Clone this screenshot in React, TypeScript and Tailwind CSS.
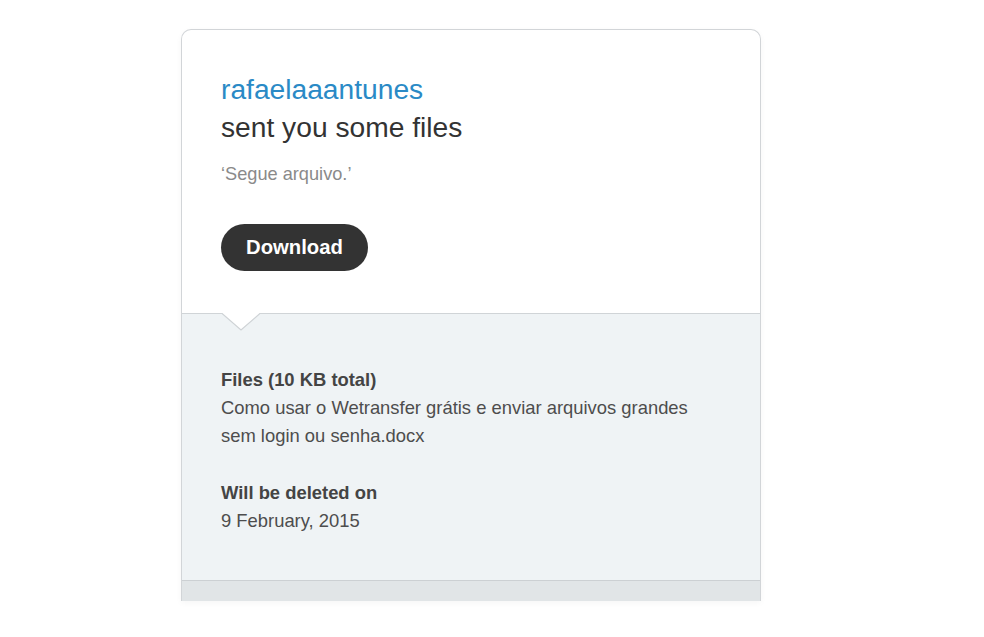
const font = { fontFamily: '"Liberation Sans", Arial, sans-serif' };

export default function App() {
  return (
    <div className="min-h-screen bg-white" style={font}>
      <div className="pt-[29px] pl-[181px]">
        {/* Card */}
        <div className="w-[580px] rounded-t-[10px] border border-b-0 border-[#d2d5d8] bg-white shadow-[0_2px_6px_rgba(0,0,0,0.04)]">
          {/* Header */}
          <div className="px-[39px] pt-[40px] pb-[42px]">
            <div className="text-[28.2px] leading-[38px] text-[#2a8ac6]">rafaelaaantunes</div>
            <div className="text-[28.2px] leading-[38px] text-[#333333]">sent you some files</div>
            <p className="mt-[16px] text-[18.2px] leading-[24px] text-[#8a8a8a]">‘Segue arquivo.’</p>
            <button className="mt-[38px] h-[47px] rounded-full bg-[#333333] px-[25px] text-[20.3px] font-bold text-white">
              Download
            </button>
          </div>

          {/* Details */}
          <div className="relative border-t border-[#d0d4d7] bg-[#eff3f5] px-[39px] pt-[52px] pb-[45px] text-[18.4px] leading-[28px] text-[#4d4d4d]">
            <svg
              className="absolute left-[40px] top-[-1px]"
              width="38"
              height="19"
              viewBox="0 0 38 19"
            >
              <polygon points="0,0 19,17 38,0" fill="#ffffff" />
              <polyline points="0,0.5 19,17 38,0.5" fill="none" stroke="#cfd3d6" strokeWidth="1.2" />
            </svg>
            <div className="font-bold text-[#444444]">Files (10 KB total)</div>
            <div>Como usar o Wetransfer grátis e enviar arquivos grandes</div>
            <div>sem login ou senha.docx</div>
            <div className="mt-[29px] font-bold text-[#444444]">Will be deleted on</div>
            <div>9 February, 2015</div>
          </div>

          {/* Footer band */}
          <div className="h-[21px] border-t border-[#ccd0d3] bg-[#e1e5e7]" />
        </div>
      </div>
    </div>
  );
}
